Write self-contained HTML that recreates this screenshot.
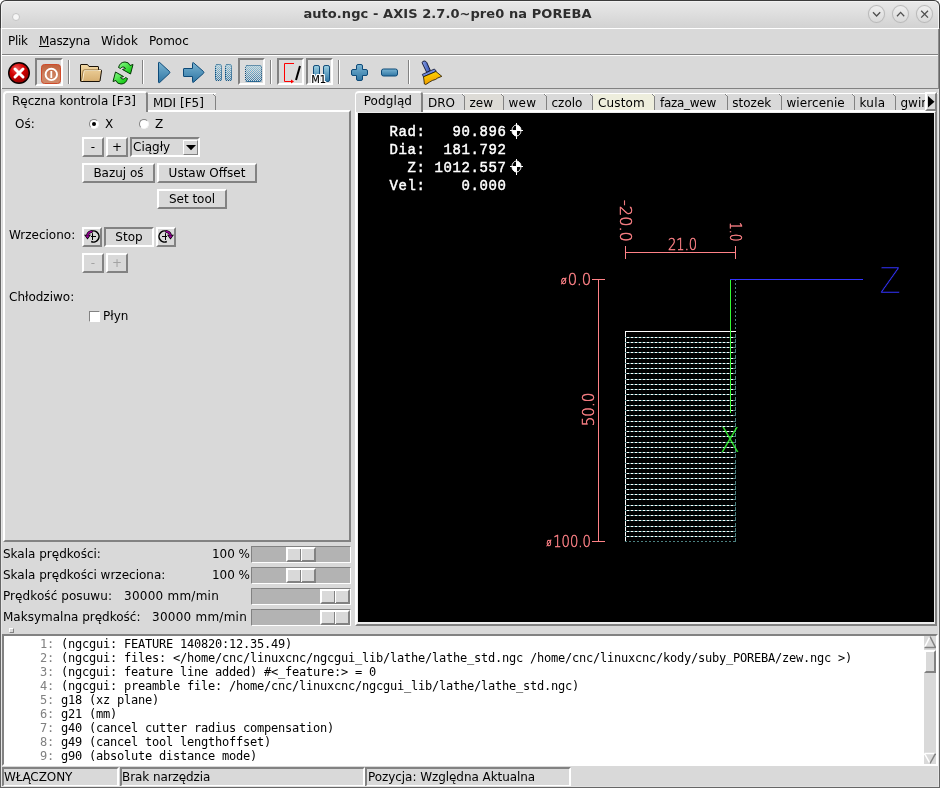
<!DOCTYPE html>
<html lang="pl">
<head>
<meta charset="utf-8">
<title>auto.ngc - AXIS 2.7.0~pre0 na POREBA</title>
<style>
*{box-sizing:border-box;margin:0;padding:0}
html,body{width:940px;height:788px;overflow:hidden;background:#fff}
body{position:relative;font-family:"DejaVu Sans","Liberation Sans",sans-serif;font-size:12px;color:#000;line-height:1}
.abs,.abs>*{position:absolute}
#win{position:absolute;left:0;top:0;width:940px;height:788px;overflow:hidden;will-change:transform;-webkit-font-smoothing:antialiased}
#win div,#win svg{position:absolute;white-space:nowrap}
.t{font-size:12px;line-height:14px;height:14px}
/* title */
#title{left:0;top:0;width:940px;height:28px;background:linear-gradient(#e9e9e9,#d2d2d2);border-radius:6px 6px 0 0;border:1px solid #3c3c3c;border-bottom:none;box-shadow:inset 1px 1px 0 #f2f2f2,inset -1px 0 0 #f2f2f2}
#titletext{left:0;top:6px;width:895px;text-align:center;font-weight:bold;font-size:13px;line-height:16px;color:#2e2e2e;letter-spacing:0.07px}
.wbtn{top:5px;width:17px;height:18px;border-radius:50%;border:1px solid #b9b9b9;background:linear-gradient(#eeeeee,#dadada);box-shadow:0 0 1px #c4c4c4}
/* tk relief */
.raised{border:2px solid;border-color:#fff #828282 #828282 #fff;background:#d9d9d9}
.sunken{border:2px solid;border-color:#828282 #fff #fff #828282;background:#d9d9d9}
.slab{border:2px solid;border-color:#828282 #fff #fff #828282;background:#d9d9d9}
.notch{width:1px;height:1px;background:#828282;box-shadow:1px 1px 0 #828282,1px 0 0 #fff}
.btn{border:2px solid;border-color:#fff #828282 #828282 #fff;background:#d9d9d9;text-align:center;font-size:12px}
.sep{width:2px;border-left:1px solid #828282;border-right:1px solid #fff}
.mono{font-family:"DejaVu Sans Mono","Liberation Mono",monospace;font-size:12px;letter-spacing:-0.225px}
.dro{font-family:"Liberation Mono","DejaVu Sans Mono",monospace;font-weight:normal;font-size:14px;letter-spacing:0.6px;-webkit-text-stroke:0.45px #fff;color:#fff;white-space:pre!important;line-height:18px}
.radio{width:10px;height:10px;border-radius:5px;background:#fff;border:1px solid;border-color:#828282 #f4f4f4 #f4f4f4 #828282}
.dot{left:2px;top:2px;width:4px;height:4px;border-radius:2px;background:#000}
.trough{width:100px;height:17px;background:#b3b3b3;border:1px solid;border-color:#828282 #fff #fff #828282}
.thumb{top:0;width:30px;height:15px;background:#d9d9d9;border:2px solid;border-color:#fff #828282 #828282 #fff}
.thumb:after{content:"";position:absolute;left:12px;top:0;width:0;height:12px;border-left:1px solid #828282;border-right:1px solid #fff}
</style>
</head>
<body>
<div id="win">
<div style="left:0;top:0;width:940px;height:788px;background:#d9d9d9;border-radius:6px 6px 0 0"></div>
<!-- TITLEBAR -->
<div id="title"></div>
<div id="titletext">auto.ngc - AXIS 2.7.0~pre0 na POREBA</div>
<div style="left:12px;top:13px;width:8px;height:8px;border-radius:4px;background:#f6f6f6;border:1px solid #c4c4c4"></div>
<div class="wbtn" style="left:868px"></div>
<div class="wbtn" style="left:892px"></div>
<div class="wbtn" style="left:916px"></div>
<svg style="left:868px;top:5px" width="66" height="18" viewBox="0 0 66 18" fill="none" stroke="#505050" stroke-width="1.3">
<path d="M5 7.200 L8.600 11 L12.200 7.200"/>
<path d="M29 11.200 L32.600 7.400 L36.200 11.200"/>
<path d="M53.200 5.800 L60 12.600 M60 5.800 L53.200 12.600"/>
</svg>
<div style="left:1px;top:28px;width:938px;height:1px;background:#fff"></div>
<!-- MENUBAR -->
<div class="t" style="left:8px;top:34px;letter-spacing:-0.3px">Plik</div>
<div class="t" style="left:39px;top:34px;letter-spacing:-0.15px"><u>M</u>aszyna</div>
<div class="t" style="left:101px;top:34px">Widok</div>
<div class="t" style="left:149px;top:34px">Pomoc</div>
<div style="left:1px;top:54px;width:938px;height:1px;background:#828282"></div>
<div style="left:1px;top:55px;width:938px;height:1px;background:#fff"></div>
<!-- TOOLBAR -->
<svg id="toolbar" style="left:0;top:56px" width="940" height="32" viewBox="0 56 940 32">
<defs>
<radialGradient id="gStop" cx="0.4" cy="0.3" r="0.75"><stop offset="0" stop-color="#f05a5a"/><stop offset="0.45" stop-color="#d40000"/><stop offset="1" stop-color="#8a0000"/></radialGradient>
<linearGradient id="gPow" x1="0" y1="0" x2="0" y2="1"><stop offset="0" stop-color="#c0603c"/><stop offset="0.6" stop-color="#cd8260"/><stop offset="1" stop-color="#d08a6a"/></linearGradient>
<linearGradient id="gBlue" x1="0" y1="0" x2="0" y2="1"><stop offset="0" stop-color="#7ab4d2"/><stop offset="1" stop-color="#2f76a4"/></linearGradient>
<linearGradient id="gFold" x1="0" y1="0" x2="0" y2="1"><stop offset="0" stop-color="#f3d9a5"/><stop offset="1" stop-color="#d6ae70"/></linearGradient>
<linearGradient id="gGreen" x1="0" y1="0" x2="1" y2="1"><stop offset="0" stop-color="#8cff8c"/><stop offset="1" stop-color="#00c000"/></linearGradient>
<linearGradient id="gBroom" x1="0" y1="0" x2="0.300" y2="1"><stop offset="0" stop-color="#ffe000"/><stop offset="1" stop-color="#f09a00"/></linearGradient>
<linearGradient id="gHandle" x1="0" y1="0.500" x2="1" y2="0.300"><stop offset="0" stop-color="#95abec"/><stop offset="1" stop-color="#2444aa"/></linearGradient>
<linearGradient id="gBlueL" x1="0" y1="0" x2="0" y2="1"><stop offset="0" stop-color="#9ccfe2"/><stop offset="1" stop-color="#2f76a4"/></linearGradient>
<pattern id="stipbg" x="0" y="0" width="2" height="2" patternUnits="userSpaceOnUse"><rect x="1" y="0" width="1" height="1" fill="#d9d9d9"/><rect x="0" y="1" width="1" height="1" fill="#d9d9d9"/></pattern>
<pattern id="stip" x="0" y="0" width="2" height="2" patternUnits="userSpaceOnUse"><rect x="0" y="0" width="2" height="2" fill="#d9d9d9"/><rect x="0" y="0" width="1" height="1" fill="#3a7ca6"/><rect x="1" y="1" width="1" height="1" fill="#3a7ca6"/></pattern>
</defs>
<!-- estop -->
<circle cx="19" cy="73" r="10.300" fill="url(#gStop)" stroke="#0a0000" stroke-width="1.400"/>
<path d="M15 69 L23 77 M23 69 L15 77" stroke="#fff" stroke-width="3" stroke-linecap="round"/>
<!-- power (pressed) -->
<rect x="35" y="58" width="28" height="28" fill="#fff"/>
<path d="M35 58 H63 L61 60 H37 V84 L35 86 Z" fill="#828282"/>
<rect x="37" y="60" width="24" height="24" fill="#dcdcdc"/>
<rect x="41.5" y="64.5" width="19" height="19" rx="3" fill="url(#gPow)" stroke="#cf4a2a" stroke-width="1"/>
<circle cx="51.300" cy="74.400" r="5.700" fill="none" stroke="#fff" stroke-width="1.900"/>
<path d="M51.300 71 V78" stroke="#fff" stroke-width="1.800"/>
<!-- separators -->
<g>
<rect x="68" y="60" width="1" height="24" fill="#828282"/><rect x="69" y="60" width="1" height="24" fill="#fff"/>
<rect x="142" y="60" width="1" height="24" fill="#828282"/><rect x="143" y="60" width="1" height="24" fill="#fff"/>
<rect x="270" y="60" width="1" height="24" fill="#828282"/><rect x="271" y="60" width="1" height="24" fill="#fff"/>
<rect x="338" y="60" width="1" height="24" fill="#828282"/><rect x="339" y="60" width="1" height="24" fill="#fff"/>
<rect x="408" y="60" width="1" height="24" fill="#828282"/><rect x="409" y="60" width="1" height="24" fill="#fff"/>
</g>
<!-- folder -->
<path d="M80.5 65 Q80.5 64.5 81 64.5 H87.5 L89 66.5 H98 Q98.5 66.5 98.5 67 V70 H101 Q101.8 70 101.5 71 L100 81 Q99.8 81.5 99 81.5 H81.2 Q80.5 81.5 80.5 81 Z" fill="url(#gFold)" stroke="#1a1208" stroke-width="1"/>
<path d="M82.5 81 L84 71.5 Q84.2 70.5 85 70.5 H101" fill="none" stroke="#fff3d6" stroke-width="1"/>
<path d="M81.5 80.5 L83 71 Q83.2 69.8 84.4 69.8 H98.5" fill="none" stroke="#8a6a3a" stroke-width="0.8"/>
<!-- reload -->
<g stroke="#063806" stroke-width="1" fill="url(#gGreen)">
<path d="M118.5 67.5 Q120 62 125 62 Q129 62 130 65.5 L133 64.5 L130.5 74 L122.5 69.5 L125.5 68.5 Q124.5 66.5 122.5 67 Q121 67.5 120.5 68.5 Z"/>
<path d="M127.500 78.500 Q126 84 121 84 Q117 84 116 80.500 L113 81.500 L115.500 72 L123.500 76.500 L120.500 77.500 Q121.500 79.500 123.500 79 Q125 78.500 125.500 77.500 Z"/>
</g>
<!-- play -->
<path d="M158.500 63 Q158.500 61.800 159.700 62.500 L169.500 71.500 Q170.300 72.400 169.500 73.300 L159.700 82.500 Q158.500 83.200 158.500 82 Z" fill="url(#gBlue)" stroke="#0d4a78" stroke-width="1"/>
<!-- step arrow -->
<path d="M184 68.500 H192.500 V63.500 Q192.500 62 193.800 63 L203.500 71.500 Q204.300 72.400 203.500 73.300 L193.800 82 Q192.500 83 192.500 81.500 V76.500 H184 Q183.500 76.500 183.500 76 V69 Q183.500 68.500 184 68.500 Z" fill="url(#gBlue)" stroke="#0d4a78" stroke-width="1"/>
<!-- pause (disabled) -->
<rect x="215" y="64" width="7" height="17" rx="2" fill="url(#gBlueL)"/>
<rect x="225" y="64" width="7" height="17" rx="2" fill="url(#gBlueL)"/>
<rect x="215" y="64" width="7" height="17" rx="2" fill="url(#stipbg)"/>
<rect x="225" y="64" width="7" height="17" rx="2" fill="url(#stipbg)"/>
<rect x="215.500" y="64.500" width="6" height="16" rx="2" fill="none" stroke="#0d4a78" stroke-width="1" stroke-dasharray="1 1"/>
<rect x="225.500" y="64.500" width="6" height="16" rx="2" fill="none" stroke="#0d4a78" stroke-width="1" stroke-dasharray="1 1"/>
<!-- stop (pressed/disabled) -->
<rect x="238" y="58" width="27" height="27" fill="#fff"/>
<path d="M238 58 H265 L263 60 H240 V83 L238 85 Z" fill="#828282"/>
<rect x="240" y="60" width="23" height="23" fill="#dcdcdc"/>
<rect x="245" y="65" width="17" height="17" rx="2" fill="url(#gBlueL)"/>
<rect x="245" y="65" width="17" height="17" rx="2" fill="url(#stipbg)"/>
<rect x="245.500" y="65.500" width="16" height="16" rx="2" fill="none" stroke="#0d4a78" stroke-width="1" stroke-dasharray="1 1"/>
<!-- block delete -->
<rect x="277" y="58" width="27" height="27" fill="#fff"/>
<path d="M277 58 H304 L302 60 H279 V83 L277 85 Z" fill="#828282"/>
<rect x="279" y="60" width="23" height="23" fill="#dcdcdc"/>
<path d="M294 63.500 H284.500 V81.500 H292" fill="none" stroke="#ff0000" stroke-width="1"/>
<path d="M291 79.500 L294 81.500 L291 83.500 Z" fill="#ff0000"/>
<path d="M300 66 L296 80" stroke="#000" stroke-width="2"/>
<!-- optional stop M1 -->
<rect x="306" y="58" width="27" height="27" fill="#fff"/>
<path d="M306 58 H333 L331 60 H308 V83 L306 85 Z" fill="#828282"/>
<rect x="308" y="60" width="23" height="23" fill="#dcdcdc"/>
<rect x="313.500" y="65.500" width="6" height="16" rx="1.600" fill="url(#gBlueL)" stroke="#0d4a78" stroke-width="1"/>
<rect x="323.500" y="65.500" width="6" height="16" rx="1.600" fill="url(#gBlueL)" stroke="#0d4a78" stroke-width="1"/>
<!-- plus -->
<path d="M358 64.500 H361 Q362.500 64.500 362.500 66 V69.500 H366 Q367.500 69.500 367.500 71 V74 Q367.500 75.500 366 75.500 H362.500 V79 Q362.500 80.500 361 80.500 H358 Q356.500 80.500 356.500 79 V75.500 H353 Q351.500 75.500 351.500 74 V71 Q351.500 69.500 353 69.500 H356.500 V66 Q356.500 64.500 358 64.500 Z" fill="url(#gBlue)" stroke="#0d4a78" stroke-width="1"/>
<!-- minus -->
<rect x="381.500" y="69" width="16" height="7" rx="2" fill="url(#gBlue)" stroke="#0d4a78" stroke-width="1"/>
<!-- broom -->
<path d="M422.100 62.800 Q422.300 61.200 424.200 61 Q426 61 426.800 62.600 L430.300 70.400 L426.800 72.600 Z" fill="url(#gHandle)" stroke="#0a0f2a" stroke-width="0.900"/>
<path d="M422.300 74.400 L434.400 69 L436.300 71.300 L423.500 76.900 Z" fill="#6f8add" stroke="#0a0f2a" stroke-width="0.800"/>
<path d="M423.500 76.800 L435.900 71.500 L441.800 76.300 L437.400 78.200 L435.700 79.400 L432.300 80.500 L429.700 82 L425.800 84.500 L424.400 84 Z" fill="url(#gBroom)" stroke="#1a1200" stroke-width="0.800"/>
</svg>
<div style="left:311.300px;top:73.500px;font-size:10px;line-height:12px;height:12px;letter-spacing:-0.2px;-webkit-text-stroke:0.15px #000;text-shadow:1px 0 0 #fff,-1px 0 0 #fff,0 1px 0 #fff,0 -1px 0 #fff,1px 1px 0 #fff,-1px -1px 0 #fff,1px -1px 0 #fff,-1px 1px 0 #fff">M1</div>
<div style="left:1px;top:88px;width:938px;height:1px;background:#828282"></div>
<!-- LEFT -->
<div id="left" style="left:0;top:90px;width:356px;height:540px">
<!-- notebook pane -->
<div style="left:3px;top:20px;width:348px;height:432px;border:2px solid;border-color:#fff #828282 #828282 #fff"></div>
<!-- inactive tab MDI -->
<div style="left:148px;top:3px;width:68px;height:17px;border-top:1px solid #fff"></div><div style="left:215px;top:6px;width:1px;height:14px;background:#828282"></div><div class="notch" style="left:213px;top:4px"></div>
<div class="t" style="left:153px;top:6px">MDI [F5]</div>
<!-- active tab -->
<div style="left:3px;top:1px;width:145px;height:21px;background:#d9d9d9;border:2px solid;border-color:#fff #828282 #d9d9d9 #fff;border-bottom:none;border-radius:4px 4px 0 0"></div>
<div class="t" style="left:12px;top:4px">Ręczna kontrola [F3]</div>
<!-- axis -->
<div class="t" style="left:15px;top:27px">Oś:</div>
<div class="radio" style="left:89px;top:29px"><div class="dot"></div></div>
<div class="t" style="left:105px;top:27px">X</div>
<div class="radio" style="left:139px;top:29px"></div>
<div class="t" style="left:155px;top:27px">Z</div>
<div class="btn" style="left:82px;top:47px;width:22px;height:20px"><div class="t" style="left:0;top:1px;width:18px">-</div></div>
<div class="btn" style="left:106px;top:47px;width:22px;height:20px"><div class="t" style="left:0;top:1px;width:18px">+</div></div>
<div class="sunken" style="left:130px;top:47px;width:70px;height:20px"><div class="t" style="left:1px;top:1px">Ciągły</div>
<div style="left:51px;top:1px;width:15px;height:15px;border:1px solid;border-color:#fff #828282 #828282 #fff"></div>
<svg style="left:54px;top:6px" width="10" height="6" viewBox="0 0 10 6"><path d="M0 0 H10 L5 5.300 Z" fill="#000"/></svg></div>
<div class="btn" style="left:82px;top:73px;width:73px;height:20px"><div class="t" style="left:0;top:1px;width:69px">Bazuj oś</div></div>
<div class="btn" style="left:157px;top:73px;width:100px;height:20px"><div class="t" style="left:0;top:1px;width:96px">Ustaw Offset</div></div>
<div class="btn" style="left:157px;top:99px;width:70px;height:20px"><div class="t" style="left:0;top:1px;width:66px">Set tool</div></div>
<!-- spindle -->
<div class="t" style="left:9px;top:138px">Wrzeciono:</div>
<div class="btn" style="left:82px;top:137px;width:20px;height:20px">
<svg style="left:0;top:0" width="16" height="16" viewBox="0 0 16 16"><path d="M5.600 3.600 A5.500 5.500 0 1 1 7.200 12.500" fill="none" stroke="#000" stroke-width="1.500"/><path d="M8.500 4.200 V11 M7 7.500 H12" stroke="#000" stroke-width="1" fill="none"/><path d="M8.500 2.400 Q4.200 2.600 3.500 6.400" fill="none" stroke="#000" stroke-width="2.800"/><path d="M0 5.800 H7 L3.500 10.600 Z" fill="#000"/><path d="M8.300 2.500 Q4.300 2.700 3.600 6.400" fill="none" stroke="#990099" stroke-width="1.500"/><path d="M1.500 6.500 H5.600 L3.500 9.300 Z" fill="#990099"/></svg></div>
<div class="sunken" style="left:104px;top:137px;width:50px;height:20px"><div class="t" style="left:0;top:1px;width:46px;text-align:center">Stop</div></div>
<div class="btn" style="left:156px;top:137px;width:20px;height:20px">
<svg style="left:0;top:0" width="16" height="16" viewBox="0 0 16 16"><g transform="translate(16 0) scale(-1 1)"><path d="M5.600 3.600 A5.500 5.500 0 1 1 7.200 12.500" fill="none" stroke="#000" stroke-width="1.500"/><path d="M8.500 4.200 V11 M7 7.500 H12" stroke="#000" stroke-width="1" fill="none"/><path d="M8.500 2.400 Q4.200 2.600 3.500 6.400" fill="none" stroke="#000" stroke-width="2.800"/><path d="M0 5.800 H7 L3.500 10.600 Z" fill="#000"/><path d="M8.300 2.500 Q4.300 2.700 3.600 6.400" fill="none" stroke="#990099" stroke-width="1.500"/><path d="M1.500 6.500 H5.600 L3.500 9.300 Z" fill="#990099"/></g></svg></div>
<div class="btn" style="left:82px;top:163px;width:22px;height:20px"><div class="t" style="left:0;top:1px;width:18px;color:#a3a3a3">-</div></div>
<div class="btn" style="left:106px;top:163px;width:22px;height:20px"><div class="t" style="left:0;top:1px;width:18px;color:#a3a3a3">+</div></div>
<!-- coolant -->
<div class="t" style="left:9px;top:200px">Chłodziwo:</div>
<div style="left:89px;top:221px;width:11px;height:11px;background:#fff;border:1px solid;border-color:#828282 #fff #fff #828282"></div>
<div class="t" style="left:103px;top:219px">Płyn</div>
<!-- sliders -->
<div class="t" style="left:3px;top:457px">Skala prędkości:</div>
<div class="t" style="left:150px;top:457px;width:100px;text-align:right">100 %</div>
<div class="t" style="left:3px;top:478px">Skala prędkości wrzeciona:</div>
<div class="t" style="left:150px;top:478px;width:100px;text-align:right">100 %</div>
<div class="t" style="left:3px;top:499px;letter-spacing:0.08px">Prędkość posuwu:</div>
<div class="t" style="left:124px;top:499px;letter-spacing:0.25px">30000 mm/min</div>
<div class="t" style="left:3px;top:520px">Maksymalna prędkość:</div>
<div class="t" style="left:152px;top:520px;letter-spacing:0.25px">30000 mm/min</div>
<div class="trough" style="left:251px;top:456px"><div class="thumb" style="left:34px"></div></div>
<div class="trough" style="left:251px;top:477px"><div class="thumb" style="left:34px"></div></div>
<div class="trough" style="left:251px;top:498px"><div class="thumb" style="left:68px"></div></div>
<div class="trough" style="left:251px;top:519px"><div class="thumb" style="left:68px"></div></div>
<!-- sash handle -->
<div style="left:9px;top:538px;width:5px;height:5px;border:1px solid;border-color:#fff #828282 #828282 #fff"></div>
</div>
<!-- RIGHT -->
<div id="right" style="left:356px;top:90px;width:584px;height:540px">
<div style="left:-1px;top:20px;width:582px;height:516px;border:2px solid;border-color:#fff #828282 #828282 #fff"></div>
<div style="left:-1px;top:20px;width:3px;height:514px;background:#fff"></div>
<div style="left:67px;top:3px;width:42px;height:17px;border-top:1px solid #fff"></div><div style="left:108px;top:6px;width:1px;height:14px;background:#828282"></div><div class="notch" style="left:106px;top:4px"></div>
<div class="t" style="left:72px;top:6px">DRO</div>
<div style="left:109px;top:3px;width:39px;height:17px;border-top:1px solid #fff;background:#dddbd6"></div><div style="left:147px;top:6px;width:1px;height:14px;background:#828282"></div><div class="notch" style="left:145px;top:4px"></div>
<div class="t" style="left:113.5px;top:6px">zew</div>
<div style="left:148px;top:3px;width:43px;height:17px;border-top:1px solid #fff"></div><div style="left:190px;top:6px;width:1px;height:14px;background:#828282"></div><div class="notch" style="left:188px;top:4px"></div>
<div class="t" style="left:152.5px;top:6px;letter-spacing:0.3px">wew</div>
<div style="left:191px;top:3px;width:46px;height:17px;border-top:1px solid #fff"></div><div style="left:236px;top:6px;width:1px;height:14px;background:#828282"></div><div class="notch" style="left:234px;top:4px"></div>
<div class="t" style="left:195.5px;top:6px">czolo</div>
<div style="left:237px;top:3px;width:62px;height:17px;border-top:1px solid #fff;background:#eeeedd"></div><div style="left:298px;top:6px;width:1px;height:14px;background:#828282"></div><div class="notch" style="left:296px;top:4px"></div>
<div class="t" style="left:242px;top:6px;letter-spacing:0.15px">Custom</div>
<div style="left:299px;top:3px;width:73px;height:17px;border-top:1px solid #fff"></div><div style="left:371px;top:6px;width:1px;height:14px;background:#828282"></div><div class="notch" style="left:369px;top:4px"></div>
<div class="t" style="left:304px;top:6px;letter-spacing:-0.28px">faza_wew</div>
<div style="left:372px;top:3px;width:54px;height:17px;border-top:1px solid #fff"></div><div style="left:425px;top:6px;width:1px;height:14px;background:#828282"></div><div class="notch" style="left:423px;top:4px"></div>
<div class="t" style="left:376.3px;top:6px">stozek</div>
<div style="left:426px;top:3px;width:73px;height:17px;border-top:1px solid #fff"></div><div style="left:498px;top:6px;width:1px;height:14px;background:#828282"></div><div class="notch" style="left:496px;top:4px"></div>
<div class="t" style="left:430.4px;top:6px;letter-spacing:0.1px">wiercenie</div>
<div style="left:499px;top:3px;width:41px;height:17px;border-top:1px solid #fff"></div><div style="left:539px;top:6px;width:1px;height:14px;background:#828282"></div><div class="notch" style="left:537px;top:4px"></div>
<div class="t" style="left:503.4px;top:6px;letter-spacing:0.3px">kula</div>
<div style="left:540px;top:3px;width:45px;height:17px;border-top:1px solid #fff"></div><div style="left:584px;top:6px;width:1px;height:14px;background:#828282"></div><div class="notch" style="left:582px;top:4px"></div>
<div class="t" style="left:544.5px;top:6px">gwint</div>
<div style="left:-1px;top:1px;width:68px;height:21px;background:#d9d9d9;border:2px solid;border-color:#fff #828282 #d9d9d9 #fff;border-left-width:1px;border-bottom:none;border-radius:4px 4px 0 0"></div>
<div class="t" style="left:7.7px;top:4px;letter-spacing:0.1px">Podgląd</div>
<div class="btn" style="left:569px;top:2px;width:12px;height:19px"></div>
<svg style="left:572px;top:6px" width="7" height="12" viewBox="0 0 7 12"><path d="M0 0 L6.500 5.750 L0 11.500 Z" fill="#000"/></svg>
<div style="left:1px;top:22px;width:578px;height:512px;background:#ececec"></div>
<div id="canvas" style="left:2px;top:23px;width:576px;height:509px;background:#000;overflow:hidden">
<div class="dro" style="left:31.500px;top:10px">Rad:   90.896
Dia:  181.792
  Z: 1012.557
Vel:    0.000</div>
<svg style="left:0;top:0" width="576" height="509" viewBox="358 113 576 509" shape-rendering="crispEdges">
<defs><pattern id="dashw" x="627" y="0" width="4" height="1" patternUnits="userSpaceOnUse"><rect x="0" y="0" width="2" height="1" fill="#fff"/></pattern><pattern id="dasht" x="627" y="0" width="4" height="1" patternUnits="userSpaceOnUse"><rect x="2" y="0" width="2" height="1" fill="#4c8080"/></pattern><pattern id="dashv" x="0" y="279" width="1" height="4" patternUnits="userSpaceOnUse"><rect x="0" y="0" width="1" height="2" fill="#4c8080"/></pattern></defs>
<rect x="625" y="331" width="1" height="211" fill="#fff"/><g fill="#4c8080">
<rect x="625" y="337" width="111" height="1"/>
<rect x="625" y="342" width="111" height="1"/>
<rect x="625" y="347" width="111" height="1"/>
<rect x="625" y="352" width="111" height="1"/>
<rect x="625" y="358" width="111" height="1"/>
<rect x="625" y="363" width="111" height="1"/>
<rect x="625" y="368" width="111" height="1"/>
<rect x="625" y="373" width="111" height="1"/>
<rect x="625" y="379" width="111" height="1"/>
<rect x="625" y="384" width="111" height="1"/>
<rect x="625" y="389" width="111" height="1"/>
<rect x="625" y="394" width="111" height="1"/>
<rect x="625" y="400" width="111" height="1"/>
<rect x="625" y="405" width="111" height="1"/>
<rect x="625" y="410" width="111" height="1"/>
<rect x="625" y="415" width="111" height="1"/>
<rect x="625" y="421" width="111" height="1"/>
<rect x="625" y="426" width="111" height="1"/>
<rect x="625" y="431" width="111" height="1"/>
<rect x="625" y="436" width="111" height="1"/>
<rect x="625" y="442" width="111" height="1"/>
<rect x="625" y="447" width="111" height="1"/>
<rect x="625" y="452" width="111" height="1"/>
<rect x="625" y="457" width="111" height="1"/>
<rect x="625" y="463" width="111" height="1"/>
<rect x="625" y="468" width="111" height="1"/>
<rect x="625" y="473" width="111" height="1"/>
<rect x="625" y="478" width="111" height="1"/>
<rect x="625" y="484" width="111" height="1"/>
<rect x="625" y="489" width="111" height="1"/>
<rect x="625" y="494" width="111" height="1"/>
<rect x="625" y="499" width="111" height="1"/>
<rect x="625" y="505" width="111" height="1"/>
<rect x="625" y="510" width="111" height="1"/>
<rect x="625" y="515" width="111" height="1"/>
<rect x="625" y="520" width="111" height="1"/>
<rect x="625" y="526" width="111" height="1"/>
<rect x="625" y="531" width="111" height="1"/>
<rect x="625" y="536" width="111" height="1"/>
</g>
<g fill="url(#dashw)">
<rect x="625" y="337" width="111" height="1"/>
<rect x="625" y="342" width="111" height="1"/>
<rect x="625" y="347" width="111" height="1"/>
<rect x="625" y="352" width="111" height="1"/>
<rect x="625" y="358" width="111" height="1"/>
<rect x="625" y="363" width="111" height="1"/>
<rect x="625" y="368" width="111" height="1"/>
<rect x="625" y="373" width="111" height="1"/>
<rect x="625" y="379" width="111" height="1"/>
<rect x="625" y="384" width="111" height="1"/>
<rect x="625" y="389" width="111" height="1"/>
<rect x="625" y="394" width="111" height="1"/>
<rect x="625" y="400" width="111" height="1"/>
<rect x="625" y="405" width="111" height="1"/>
<rect x="625" y="410" width="111" height="1"/>
<rect x="625" y="415" width="111" height="1"/>
<rect x="625" y="421" width="111" height="1"/>
<rect x="625" y="426" width="111" height="1"/>
<rect x="625" y="431" width="111" height="1"/>
<rect x="625" y="436" width="111" height="1"/>
<rect x="625" y="442" width="111" height="1"/>
<rect x="625" y="447" width="111" height="1"/>
<rect x="625" y="452" width="111" height="1"/>
<rect x="625" y="457" width="111" height="1"/>
<rect x="625" y="463" width="111" height="1"/>
<rect x="625" y="468" width="111" height="1"/>
<rect x="625" y="473" width="111" height="1"/>
<rect x="625" y="478" width="111" height="1"/>
<rect x="625" y="484" width="111" height="1"/>
<rect x="625" y="489" width="111" height="1"/>
<rect x="625" y="494" width="111" height="1"/>
<rect x="625" y="499" width="111" height="1"/>
<rect x="625" y="505" width="111" height="1"/>
<rect x="625" y="510" width="111" height="1"/>
<rect x="625" y="515" width="111" height="1"/>
<rect x="625" y="520" width="111" height="1"/>
<rect x="625" y="526" width="111" height="1"/>
<rect x="625" y="531" width="111" height="1"/>
<rect x="625" y="536" width="111" height="1"/>
</g>
<rect x="625" y="541" width="111" height="1" fill="url(#dasht)"/>
<rect x="735" y="279" width="1" height="52" fill="url(#dashv)"/><g fill="#4c8080"><rect x="735" y="334" width="1" height="4"/><rect x="735" y="339" width="1" height="4"/><rect x="735" y="344" width="1" height="4"/><rect x="735" y="349" width="1" height="4"/><rect x="735" y="355" width="1" height="4"/><rect x="735" y="360" width="1" height="4"/><rect x="735" y="365" width="1" height="4"/><rect x="735" y="370" width="1" height="4"/><rect x="735" y="376" width="1" height="4"/><rect x="735" y="381" width="1" height="4"/><rect x="735" y="386" width="1" height="4"/><rect x="735" y="391" width="1" height="4"/><rect x="735" y="397" width="1" height="4"/><rect x="735" y="402" width="1" height="4"/><rect x="735" y="407" width="1" height="4"/><rect x="735" y="412" width="1" height="4"/><rect x="735" y="418" width="1" height="4"/><rect x="735" y="423" width="1" height="4"/><rect x="735" y="428" width="1" height="4"/><rect x="735" y="433" width="1" height="4"/><rect x="735" y="439" width="1" height="4"/><rect x="735" y="444" width="1" height="4"/><rect x="735" y="449" width="1" height="4"/><rect x="735" y="454" width="1" height="4"/><rect x="735" y="460" width="1" height="4"/><rect x="735" y="465" width="1" height="4"/><rect x="735" y="470" width="1" height="4"/><rect x="735" y="475" width="1" height="4"/><rect x="735" y="481" width="1" height="4"/><rect x="735" y="486" width="1" height="4"/><rect x="735" y="491" width="1" height="4"/><rect x="735" y="496" width="1" height="4"/><rect x="735" y="502" width="1" height="4"/><rect x="735" y="507" width="1" height="4"/><rect x="735" y="512" width="1" height="4"/><rect x="735" y="517" width="1" height="4"/><rect x="735" y="523" width="1" height="4"/><rect x="735" y="528" width="1" height="4"/><rect x="735" y="533" width="1" height="4"/><rect x="735" y="538" width="1" height="4"/></g>
<rect x="625" y="331" width="111" height="1" fill="#fff"/>

<rect x="730" y="279" width="1" height="134" fill="#33ff33"/>
<rect x="730" y="279" width="133" height="1" fill="#3333ff"/>
<g fill="#ff8287"><rect x="625" y="252" width="111" height="1"/><rect x="625" y="246" width="1" height="13"/><rect x="735" y="246" width="1" height="13"/><rect x="598" y="279" width="1" height="263"/><rect x="592" y="279" width="13" height="1"/><rect x="592" y="541" width="13" height="1"/></g>
</svg>
<svg style="left:0;top:0" width="576" height="509" viewBox="358 113 576 509" font-family="DejaVu Sans Light, DejaVu Sans, Liberation Sans, sans-serif" font-weight="200" stroke="#ff8287" stroke-width="0.45">
<text transform="translate(668 250) rotate(0) scale(0.873 1)" font-size="15" fill="#ff8287">21.0</text>
<text transform="translate(619.6 200) rotate(90) scale(1.08 1)" font-size="15" fill="#ff8287">-20.0</text>
<text transform="translate(730 222) rotate(90) scale(0.82 1)" font-size="15" fill="#ff8287">1.0</text>
<text transform="translate(567.7 285) rotate(0) scale(0.985 1)" font-size="15" fill="#ff8287"><tspan x="-7" y="-1" font-size="10">ø</tspan><tspan x="0" y="0">0.0</tspan></text>
<text transform="translate(553.2 547) rotate(0) scale(0.88 1)" font-size="15" fill="#ff8287"><tspan x="-8" y="-1" font-size="10">ø</tspan><tspan x="0" y="0">100.0</tspan></text>
<text transform="translate(594.4 426.3) rotate(-90) scale(1.01 1)" font-size="15" fill="#ff8287">50.0</text>
<text transform="translate(879.4 293) rotate(0) scale(0.86 1)" font-size="36" fill="#3333ff" stroke="#000" stroke-width="0.5">Z</text>
<text transform="translate(719.7 452) rotate(0) scale(0.875 1)" font-size="34" fill="#33ff33" stroke="none" fill-opacity="0.85">X</text>
<g transform="translate(516.5 130.5)" stroke="none" shape-rendering="crispEdges"><ellipse rx="4.500" ry="5.500" fill="#000" stroke="#fff" stroke-width="1" shape-rendering="auto"/><path d="M0 0 V-5.500 A4.500 5.500 0 0 1 4.500 0 Z M0 0 V5.500 A4.500 5.500 0 0 1 -4.500 0 Z" fill="#fff" shape-rendering="auto"/><rect x="-0.5" y="-7.5" width="1" height="16" fill="#fff"/><rect x="-6.5" y="-0.5" width="13" height="1" fill="#fff"/></g>
<g transform="translate(516.5 166.5)" stroke="none" shape-rendering="crispEdges"><ellipse rx="4.500" ry="5.500" fill="#000" stroke="#fff" stroke-width="1" shape-rendering="auto"/><path d="M0 0 V-5.500 A4.500 5.500 0 0 1 4.500 0 Z M0 0 V5.500 A4.500 5.500 0 0 1 -4.500 0 Z" fill="#fff" shape-rendering="auto"/><rect x="-0.5" y="-7.5" width="1" height="16" fill="#fff"/><rect x="-6.5" y="-0.5" width="13" height="1" fill="#fff"/></g>
</svg>
</div>
</div>
<!-- TEXT -->
<div id="gcode" style="left:0;top:630px;width:940px;height:136px">
<div style="left:2px;top:4px;width:936px;height:132px;background:#fff;border:2px solid;border-color:#828282 #fff #fff #828282;overflow:hidden">
<div class="mono" style="left:1px;top:1px;height:14px;line-height:14px;white-space:pre"><span style="color:#808080">     1: </span>(ngcgui: FEATURE 140820:12.35.49)</div>
<div class="mono" style="left:1px;top:15px;height:14px;line-height:14px;white-space:pre"><span style="color:#808080">     2: </span>(ngcgui: files: &lt;/home/cnc/linuxcnc/ngcgui_lib/lathe/lathe_std.ngc /home/cnc/linuxcnc/kody/suby_POREBA/zew.ngc &gt;)</div>
<div class="mono" style="left:1px;top:29px;height:14px;line-height:14px;white-space:pre"><span style="color:#808080">     3: </span>(ngcgui: feature line added) #&lt;_feature:&gt; = 0</div>
<div class="mono" style="left:1px;top:43px;height:14px;line-height:14px;white-space:pre"><span style="color:#808080">     4: </span>(ngcgui: preamble file: /home/cnc/linuxcnc/ngcgui_lib/lathe/lathe_std.ngc)</div>
<div class="mono" style="left:1px;top:57px;height:14px;line-height:14px;white-space:pre"><span style="color:#808080">     5: </span>g18 (xz plane)</div>
<div class="mono" style="left:1px;top:71px;height:14px;line-height:14px;white-space:pre"><span style="color:#808080">     6: </span>g21 (mm)</div>
<div class="mono" style="left:1px;top:85px;height:14px;line-height:14px;white-space:pre"><span style="color:#808080">     7: </span>g40 (cancel cutter radius compensation)</div>
<div class="mono" style="left:1px;top:99px;height:14px;line-height:14px;white-space:pre"><span style="color:#808080">     8: </span>g49 (cancel tool lengthoffset)</div>
<div class="mono" style="left:1px;top:113px;height:14px;line-height:14px;white-space:pre"><span style="color:#808080">     9: </span>g90 (absolute distance mode)</div>
</div>
<div style="left:924px;top:6px;width:12px;height:128px;background:#d9d9d9"></div>
<svg style="left:924px;top:6px" width="12" height="128" viewBox="0 0 12 128"><path d="M6 0.500 L11.500 11.500 H0.500 Z" fill="#d9d9d9"/><path d="M6 0.500 L0.500 11.500" stroke="#fff" stroke-width="1.500" fill="none"/><path d="M6 0.500 L11.500 11.500 H0.500" stroke="#828282" stroke-width="1.500" fill="none"/><path d="M6 127.500 L11.500 117.500 H0.500 Z" fill="#d9d9d9"/><path d="M0.500 117.500 H11.500" stroke="#fff" stroke-width="1.500" fill="none"/><path d="M0.500 117.500 L6 127.500" stroke="#fff" stroke-width="1.500" fill="none"/><path d="M11.500 117.500 L6 127.500" stroke="#828282" stroke-width="1.500" fill="none"/></svg>
<div class="btn" style="left:924px;top:20px;width:12px;height:23px"></div>
</div>
<!-- STATUS -->
<div id="status" style="left:0;top:766px;width:940px;height:22px">
<div class="slab" style="left:2px;top:1px;width:117px;height:20px"><div class="t" style="left:0;top:1px;letter-spacing:-0.08px">WŁĄCZONY</div></div>
<div class="slab" style="left:120px;top:1px;width:245px;height:20px"><div class="t" style="left:0;top:1px;letter-spacing:-0.08px">Brak narzędzia</div></div>
<div class="slab" style="left:365px;top:1px;width:206px;height:20px"><div class="t" style="left:1px;top:1px;letter-spacing:-0.06px">Pozycja: Względna Aktualna</div></div>
</div>
<!-- window border -->
<div style="left:1px;top:89px;width:1px;height:698px;background:#e6e6e6"></div>
<div style="left:1px;top:28px;width:1px;height:61px;background:#fff"></div>
<div style="left:938px;top:89px;width:1px;height:698px;background:#e6e6e6"></div>
<div style="left:938px;top:29px;width:1px;height:60px;background:#8c8c8c"></div>
<div style="left:2px;top:786px;width:936px;height:1px;background:#e0e0e0"></div>
<div style="left:0;top:28px;width:1px;height:760px;background:#666"></div>
<div style="left:939px;top:28px;width:1px;height:760px;background:#666"></div>
<div style="left:0;top:787px;width:940px;height:1px;background:#666"></div>
</div>
</body>
</html>
